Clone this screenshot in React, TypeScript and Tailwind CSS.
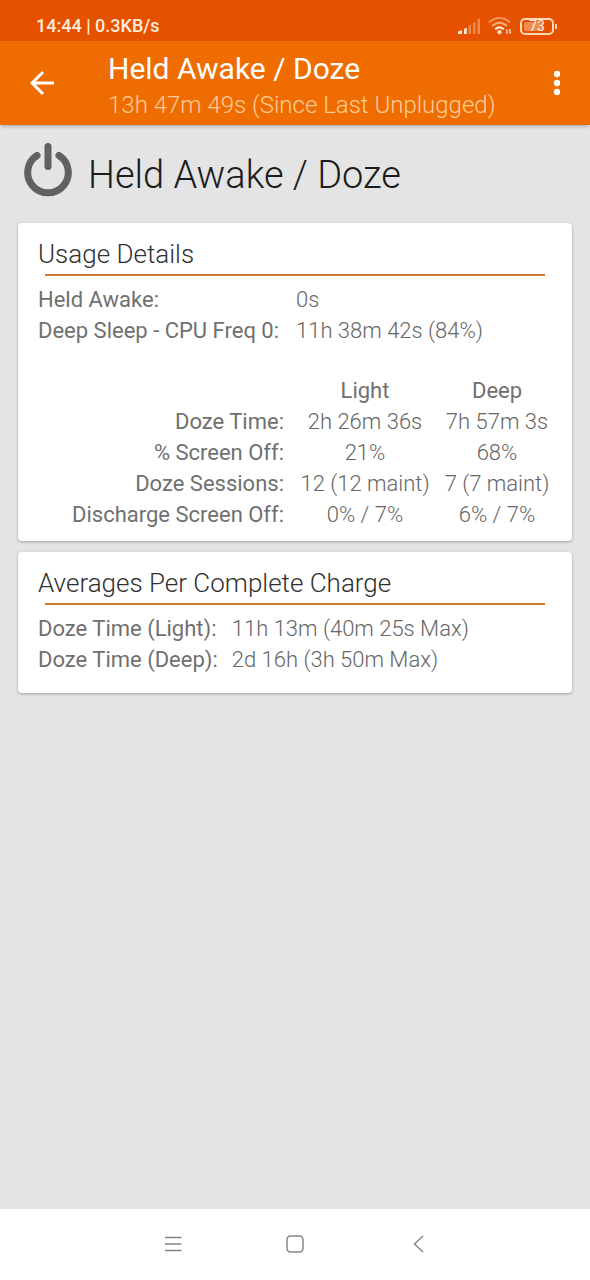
import type { ReactNode } from "react";

const usage = [
  { label: "Held Awake:", value: "0s" },
  { label: "Deep Sleep - CPU Freq 0:", value: "11h 38m 42s (84%)" },
];

const doze = [
  { label: "Doze Time:", light: "2h 26m 36s", deep: "7h 57m 3s" },
  { label: "% Screen Off:", light: "21%", deep: "68%" },
  { label: "Doze Sessions:", light: "12 (12 maint)", deep: "7 (7 maint)" },
  { label: "Discharge Screen Off:", light: "0% / 7%", deep: "6% / 7%" },
];

const averages = [
  { label: "Doze Time (Light):", value: "11h 13m (40m 25s Max)" },
  { label: "Doze Time (Deep):", value: "2d 16h (3h 50m Max)" },
];

function SignalIcon() {
  return (
    <svg width="22" height="16" viewBox="0 0 22 16" fill="#ffe9d2" aria-hidden="true">
      <path d="M0 16v-2.500L4 12v4z" />
      <path d="M6 11 8.800 9.500V16H6z" />
      <g opacity="0.38">
        <path d="M10.500 8 13 6.500V16h-2.500z" />
        <path d="M15 5l2.500-1.500V16H15z" />
        <path d="M19.500 1.500 22 0v16h-2.500z" />
      </g>
    </svg>
  );
}

function WifiIcon() {
  return (
    <svg width="24" height="18" viewBox="0 0 24 18" fill="none" stroke="#ffe9d2" strokeWidth="2" aria-hidden="true">
      <path d="M1 5.500C7.500-0.500 15.500-0.500 22 5.500" opacity="0.45" />
      <path d="M4 9c4.700-4.200 10.300-4.200 15 0" opacity="0.6" />
      <path d="M7 12.300c2.800-2.400 6.200-2.400 9 0" />
      <circle cx="11.500" cy="15.200" r="2.100" fill="#ffe9d2" stroke="none" />
      <path d="M19 17v-4.500M22 12v4.500" strokeWidth="1.200" />
      <path d="M17.600 14l1.400-1.800V14zM23.400 15.200 22 17v-1.800z" fill="#ffe9d2" stroke="none" />
    </svg>
  );
}

function PowerIcon() {
  return (
    <svg width="48" height="56" viewBox="0 0 48 56" fill="none" stroke="#616161" strokeWidth="7" strokeLinecap="round" aria-hidden="true">
      <path d="M13 13.500a20.300 20.300 0 1 0 22 0" />
      <path d="M24 4.500v20" />
    </svg>
  );
}

function Card({ title, children }: { title: string; children: ReactNode }) {
  return (
    <section className="rounded bg-white px-5 pt-4 pb-[11px] shadow-[0_1px_3px_rgba(0,0,0,0.3)]">
      <h2 className="text-[26px] leading-[31px] font-light text-[#303030]">{title}</h2>
      <div className="mx-[7px] mt-1 mb-2 h-[2px] bg-[#cf7a35]" />
      {children}
    </section>
  );
}

export default function App() {
  return (
    <div className="flex min-h-screen flex-col bg-[#e4e4e4] font-[Roboto,sans-serif]">
      <div className="flex h-[41px] items-center justify-between bg-[#e65100] pt-[11px] pr-[33px] pl-9 text-[#ffecd9]">
        <span className="text-[18px] leading-5 font-medium">14:44 | 0.3KB/s</span>
        <div className="flex items-center gap-2">
          <SignalIcon />
          <WifiIcon />
          <div className="flex items-center">
            <div className="flex h-[17px] w-[34px] items-center rounded-[5px] border-2 border-[#ffd9b5] p-[2px]">
              <div className="flex h-full w-full items-center justify-center rounded-[2px] bg-linear-to-r from-[#f08a52] from-70% to-transparent to-70% text-[14px] leading-none text-[#fff3e6]">
                73
              </div>
            </div>
            <div className="ml-px h-[5px] w-[2px] bg-[#ffd9b5]" />
          </div>
        </div>
      </div>

      <header className="flex h-[84px] items-center bg-[#ef6c00] pr-[15px] pl-6 shadow-[0_3px_3px_-1px_rgba(0,0,0,0.2)]">
        <button type="button" aria-label="Back" className="text-white">
          <svg width="36" height="36" viewBox="0 0 24 24" fill="currentColor">
            <path d="M20 11H7.830l5.590-5.590L12 4l-8 8 8 8 1.410-1.410L7.830 13H20z" />
          </svg>
        </button>
        <div className="ml-12 flex-1 pt-2">
          <div className="text-[30px] leading-9 text-white">Held Awake / Doze</div>
          <div className="text-[24px] leading-9 font-light text-[#ffcc99]">13h 47m 49s (Since Last Unplugged)</div>
        </div>
        <button type="button" aria-label="More options" className="text-white">
          <svg width="36" height="36" viewBox="0 0 24 24" fill="currentColor">
            <circle cx="12" cy="6" r="2.100" />
            <circle cx="12" cy="12" r="2.100" />
            <circle cx="12" cy="18" r="2.100" />
          </svg>
        </button>
      </header>

      <main className="flex-1 px-[18px] pt-[17px]">
        <div className="mb-[25px] flex items-center gap-4 pl-[6px]">
          <PowerIcon />
          <h1 className="pt-[10px] text-[38px] leading-[46px] font-light text-[#1c1c1c]">Held Awake / Doze</h1>
        </div>

        <div className="flex flex-col gap-[11px] text-[22px] leading-[31px] text-[#707070]">
          <Card title="Usage Details">
            <dl className="mb-[29px] grid grid-cols-[246px_1fr] gap-x-3">
              {usage.map((row) => (
                <div key={row.label} className="contents">
                  <dt>{row.label}</dt>
                  <dd className="font-light text-[#666666]">{row.value}</dd>
                </div>
              ))}
            </dl>
            <table className="w-full table-fixed text-center whitespace-nowrap">
              <thead>
                <tr>
                  <td className="w-[258px]" />
                  <th scope="col" className="font-normal">Light</th>
                  <th scope="col" className="w-[118px] pl-2 font-normal">Deep</th>
                </tr>
              </thead>
              <tbody>
                {doze.map((row) => (
                  <tr key={row.label}>
                    <th scope="row" className="pr-3 text-right font-normal">{row.label}</th>
                    <td className="font-light text-[#666666]">{row.light}</td>
                    <td className="pl-2 font-light text-[#666666]">{row.deep}</td>
                  </tr>
                ))}
              </tbody>
            </table>
          </Card>

          <Card title="Averages Per Complete Charge">
            <dl className="mb-[7px] grid grid-cols-[max-content_1fr] gap-x-[14px]">
              {averages.map((row) => (
                <div key={row.label} className="contents">
                  <dt>{row.label}</dt>
                  <dd className="font-light text-[#666666]">{row.value}</dd>
                </div>
              ))}
            </dl>
          </Card>
        </div>
      </main>

      <nav className="flex h-[71px] items-center justify-center gap-[98px] bg-white pb-[2px] text-[#858585]">
        <button type="button" aria-label="Recent apps">
          <svg width="24" height="24" viewBox="0 0 24 24" fill="none" stroke="currentColor" strokeWidth="1.500">
            <path d="M4 5.500h16.500M4 12h16.500M4 18.500h16.500" />
          </svg>
        </button>
        <button type="button" aria-label="Home">
          <svg width="24" height="24" viewBox="0 0 24 24" fill="none" stroke="currentColor" strokeWidth="1.500">
            <rect x="4" y="4" width="16" height="16" rx="3.500" />
          </svg>
        </button>
        <button type="button" aria-label="Previous screen">
          <svg width="24" height="24" viewBox="0 0 24 24" fill="none" stroke="currentColor" strokeWidth="1.500">
            <path d="M18 4l-8.500 8 8.500 8" />
          </svg>
        </button>
      </nav>
    </div>
  );
}
